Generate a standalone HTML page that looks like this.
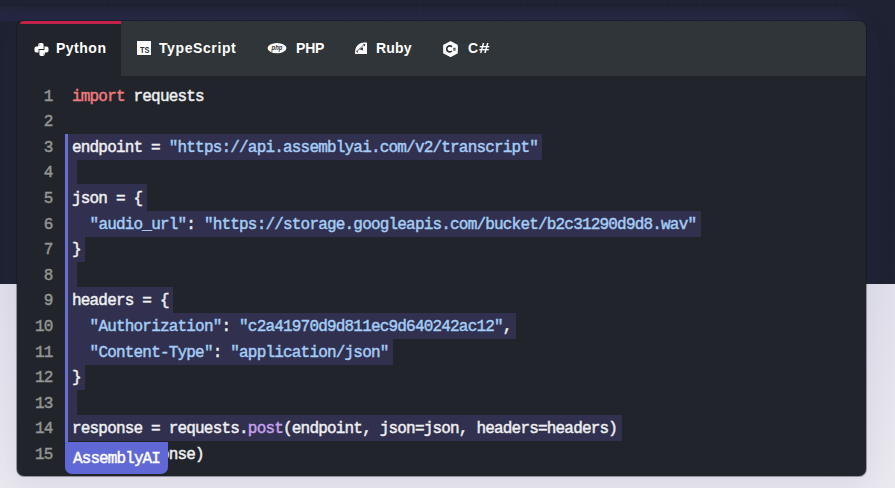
<!DOCTYPE html>
<html><head><meta charset="utf-8">
<style>
*{margin:0;padding:0;box-sizing:border-box}
html,body{width:895px;height:488px;overflow:hidden}
body{position:relative;background:linear-gradient(#e0dfea 284px,#eae9f0 488px);font-family:"Liberation Sans",sans-serif}
.bgtop{position:absolute;left:0;top:0;width:895px;height:284px;background-color:#1e2232;background-image:linear-gradient(90deg,rgba(255,255,255,0.009) 1px,transparent 1px),linear-gradient(rgba(255,255,255,0.008) 1px,transparent 1px);background-size:35px 35px;background-position:34px 22px}
.win{position:absolute;left:17px;top:20.5px;width:849px;height:455px;background:#21252b;border-radius:7px;overflow:hidden;box-shadow:0 0 0 1px rgba(10,12,16,0.35),0 8px 30px rgba(70,60,130,0.10)}
.tabs{position:absolute;left:0;top:0;width:850px;height:55.5px;background:#2f3538}
.tab{position:absolute;top:0;height:55.5px;color:#fff;font-weight:bold;font-size:14px}
.tab.active{background:#21252b}
.tab.active:before{content:"";position:absolute;left:2.5px;top:-0.3px;right:0;height:4.2px;background:#c32349;border-radius:3px 0 0 2px}
.tab svg{position:absolute}
.tab span{position:absolute;top:19px;white-space:nowrap}
.code{position:absolute;left:0;top:0;font-family:"Liberation Mono",monospace;font-size:16px;letter-spacing:-0.81px;line-height:25.6px;-webkit-text-stroke:0.45px currentColor}
.ln{position:absolute;margin-top:1.7px;width:35.5px;text-align:right;color:#939593}
.l{position:absolute;margin-top:1.7px;left:55px;white-space:pre;color:#eef0f2}
.sel{position:absolute;left:51px;height:25.6px;background:#31304f}
.kw{color:#ef7b7f}.s{color:#a4cdf6}.fn{color:#c9a0ef}
.bar{position:absolute;left:48px;top:114.2px;width:3px;height:307.4px;background:#6a70d2}
.badge{position:absolute;left:48px;top:421.9px;width:103px;height:32.1px;background:#6068d6;border-radius:0 0 7px 7px;color:#fff;font-family:"Liberation Mono",monospace;font-size:16px;letter-spacing:-0.9px;line-height:20px}
.badge span{position:absolute;left:8px;top:7.2px}
</style></head><body>
<div class="bgtop"></div>
<div style="position:absolute;left:0;top:7px;width:878px;height:14px;background:linear-gradient(rgba(120,110,200,0.05),rgba(90,80,190,0.13));-webkit-mask-image:linear-gradient(90deg,#000 95%,transparent)"></div>
<div class="win">
  <div class="tabs">
    <div class="tab active" style="left:0;width:104px">
      <svg style="left:16px;top:20px" width="17" height="17" viewBox="0 0 17 17"><g fill="#fff"><path id="py" d="M7 2.1H9Q10.6 2.1 10.6 3.7V7.95H5.55V11.6H3.3Q1.5 11.6 1.5 9.8V7.3Q1.5 5.5 3.3 5.5H5.2V3.9Q5.2 2.1 7 2.1Z"/><use href="#py" transform="rotate(180 8.5 8.5)"/></g><circle cx="6.7" cy="3.9" r="0.6" fill="#777b80"/><circle cx="10.3" cy="13.1" r="0.6" fill="#777b80"/></svg>
      <span style="left:39px;letter-spacing:0.5px">Python</span>
    </div>
    <div class="tab" style="left:104px;width:131px">
      <svg style="left:16px;top:20.5px" width="14" height="14" viewBox="0 0 14 14"><rect width="14" height="14" fill="#fff"/><text x="3" y="12.3" textLength="9.4" lengthAdjust="spacingAndGlyphs" font-family="Liberation Sans" font-weight="bold" font-size="9.8" fill="#2b3033">TS</text></svg>
      <span style="left:38px;letter-spacing:0.6px">TypeScript</span>
    </div>
    <div class="tab" style="left:235px;width:100px">
      <svg style="left:15px;top:21px" width="20" height="12" viewBox="0 0 20 12"><ellipse cx="10" cy="6.1" rx="9.5" ry="5.2" fill="#fff"/><text x="4.6" y="8" textLength="10.8" lengthAdjust="spacingAndGlyphs" font-family="Liberation Sans" font-style="italic" font-size="6.6" fill="#2b3033">php</text></svg>
      <span style="left:44px;letter-spacing:-0.2px">PHP</span>
    </div>
    <div class="tab" style="left:335px;width:87px">
      <svg style="left:2px;top:20px" width="14" height="14" viewBox="0 0 14 14"><path fill="#fff" d="M1.1 13.1V10Q1.5 5.6 5 3Q7.6 1.2 10 1.4H12.4Q13 1.4 13 2V13.1Z"/><g fill="#2f3538"><path d="M8.7 3.4L11.4 3.1L10.6 5.5Z"/><path d="M5.1 8.2L9 6.3L8.9 9.6Z"/><path d="M2.2 9.8L3.9 9.7L3.3 12.4Z"/></g><path d="M3 10.2L9.6 4" stroke="#2f3538" stroke-width="0.7"/></svg>
      <span style="left:24px;letter-spacing:0.2px">Ruby</span>
    </div>
    <div class="tab" style="left:422px;width:80px">
      <svg style="left:3px;top:19px" width="17" height="18" viewBox="0 0 17 18"><path fill="#fff" stroke="#fff" stroke-width="1.2" stroke-linejoin="round" d="M8.6 1.7L15.2 5.2V13L8.6 16.5L1.8 13V5.2Z"/><path fill="none" stroke="#2b3033" stroke-width="1.7" d="M9.9 6.8A3 3 0 1 0 9.9 11"/><path stroke="#2b3033" stroke-width="0.6" d="M11.2 8.5H13.6M11.2 10H13.6M11.9 7.6V10.9M12.9 7.6V10.9"/></svg>
      <span style="left:29px;letter-spacing:0.5px">C<b style="display:inline-block;transform:scaleX(1.35);transform-origin:0 0">#</b></span>
    </div>
  </div>
</div>
<div class="win" style="background:transparent;overflow:visible;left:17px;top:20px;box-shadow:none" id="codewrap">
  <div class="code">
    <div class="sel" style="top:114.2px;width:474.4px"></div>
    <div class="sel" style="top:139.8px;width:8.5px"></div>
    <div class="sel" style="top:164.2px;height:26.8px;width:78.8px"></div>
    <div class="sel" style="top:191px;width:632.6px"></div>
    <div class="sel" style="top:216.6px;width:17.3px"></div>
    <div class="sel" style="top:242.2px;width:8.5px"></div>
    <div class="sel" style="top:266.6px;height:26.8px;width:105.2px"></div>
    <div class="sel" style="top:293.4px;width:448px"></div>
    <div class="sel" style="top:319px;width:324.9px"></div>
    <div class="sel" style="top:344.6px;width:17.3px"></div>
    <div class="sel" style="top:370.2px;width:8.5px"></div>
    <div class="sel" style="top:394.6px;height:26.8px;width:553.5px"></div>
    <div class="bar"></div>

    <div class="ln" style="top:63px">1</div>
    <div class="ln" style="top:88.6px">2</div>
    <div class="ln" style="top:114.2px">3</div>
    <div class="ln" style="top:139.8px">4</div>
    <div class="ln" style="top:165.4px">5</div>
    <div class="ln" style="top:191px">6</div>
    <div class="ln" style="top:216.6px">7</div>
    <div class="ln" style="top:242.2px">8</div>
    <div class="ln" style="top:267.8px">9</div>
    <div class="ln" style="top:293.4px">10</div>
    <div class="ln" style="top:319px">11</div>
    <div class="ln" style="top:344.6px">12</div>
    <div class="ln" style="top:370.2px">13</div>
    <div class="ln" style="top:395.8px">14</div>
    <div class="ln" style="top:421.4px">15</div>

    <div class="l" style="top:63px"><span class="kw">import</span> requests</div>
    <div class="l" style="top:114.2px">endpoint = <span class="s">"https://api.assemblyai.com/v2/transcript"</span></div>
    <div class="l" style="top:165.4px">json = {</div>
    <div class="l" style="top:191px">  <span class="s">"audio_url"</span>: <span class="s">"https://storage.googleapis.com/bucket/b2c31290d9d8.wav"</span></div>
    <div class="l" style="top:216.6px">}</div>
    <div class="l" style="top:267.8px">headers = {</div>
    <div class="l" style="top:293.4px">  <span class="s">"Authorization"</span>: <span class="s">"c2a41970d9d811ec9d640242ac12"</span>,</div>
    <div class="l" style="top:319px">  <span class="s">"Content-Type"</span>: <span class="s">"application/json"</span></div>
    <div class="l" style="top:344.6px">}</div>
    <div class="l" style="top:395.8px">response = requests.<span class="fn">post</span>(endpoint, json=json, headers=headers)</div>
    <div class="l" style="top:421.4px"><span class="fn">print</span>(response)</div>
    <div class="badge"><span>AssemblyAI</span></div>
  </div>
</div>
</body></html>
